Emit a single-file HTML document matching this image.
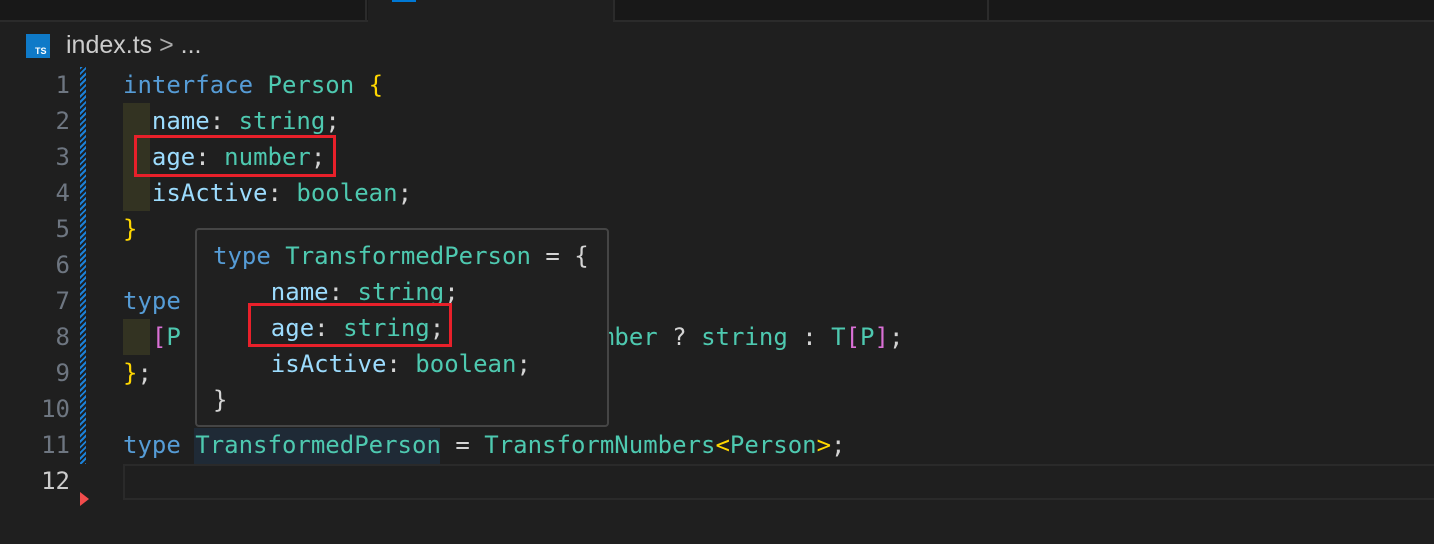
<!DOCTYPE html>
<html><head><meta charset="utf-8"><style>
*{margin:0;padding:0;box-sizing:border-box}
body{width:1434px;height:544px;background:#1f1f1f;overflow:hidden;position:relative;font-family:"DejaVu Sans Mono","Liberation Mono",monospace;font-size:24px}
.abs{position:absolute}
.ln{position:absolute;left:0;width:70px;text-align:right;color:#6e7681;line-height:36px}
.cl{position:absolute;left:123px;line-height:36px;white-space:pre;color:#d4d4d4}
.k{color:#569cd6}.t{color:#4ec9b0}.p{color:#9cdcfe}.y{color:#ffd700}.m{color:#da70d6}
</style></head><body>
<div class="abs" style="left:0;top:0;width:1434px;height:22px;background:#181818;border-bottom:2px solid #2b2b2b"></div>
<div class="abs" style="left:0;top:0;width:367px;height:22px;border-right:2px solid #2b2b2b"></div>
<div class="abs" style="left:368px;top:0;width:245px;height:24px;background:#1f1f1f"></div>
<div class="abs" style="left:392px;top:0;width:24px;height:2px;background:#0078d4"></div>
<div class="abs" style="left:613px;top:0;width:376px;height:22px;border-left:2px solid #2b2b2b;border-right:2px solid #2b2b2b"></div>
<div class="abs" style="left:26px;top:34px;width:24px;height:24px;background:#0f7ac8;color:#fff;font:bold 9px 'Liberation Sans',sans-serif;padding:12px 0 0 9px">TS</div>
<div class="abs" style="left:66px;top:31px;font:25px 'Liberation Sans',sans-serif;color:#cccccc;white-space:pre">index.ts <span style="color:#aaa;font-weight:100">&gt;</span> ...</div>
<div class="abs" style="left:80px;top:67px;width:6px;height:397px;background:repeating-linear-gradient(135deg,#1b81d8 0 2px,transparent 2px 4px)"></div>
<div class="abs" style="left:80px;top:492px;width:0;height:0;border-top:7px solid transparent;border-bottom:7px solid transparent;border-left:9px solid #f14c4c"></div>
<div class="abs" style="left:123px;top:103px;width:27px;height:108px;background:#333322"></div>
<div class="abs" style="left:123px;top:319px;width:27px;height:36px;background:#333322"></div>
<div class="abs" style="left:194px;top:428px;width:246px;height:36px;background:#1f2a36"></div>
<div class="abs" style="left:123px;top:464px;width:1311px;height:36px;border:2px solid #2a2a2a;border-right:none"></div>

<div class="ln" style="top:67px">1</div>
<div class="ln" style="top:103px">2</div>
<div class="ln" style="top:139px">3</div>
<div class="ln" style="top:175px">4</div>
<div class="ln" style="top:211px">5</div>
<div class="ln" style="top:247px">6</div>
<div class="ln" style="top:283px">7</div>
<div class="ln" style="top:319px">8</div>
<div class="ln" style="top:355px">9</div>
<div class="ln" style="top:391px">10</div>
<div class="ln" style="top:427px">11</div>
<div class="ln" style="top:463px;color:#cccccc">12</div>

<div class="cl" style="top:67px"><span class="k">interface</span> <span class="t">Person</span> <span class="y">{</span></div>
<div class="cl" style="top:103px">  <span class="p">name</span>: <span class="t">string</span>;</div>
<div class="cl" style="top:139px">  <span class="p">age</span>: <span class="t">number</span>;</div>
<div class="cl" style="top:175px">  <span class="p">isActive</span>: <span class="t">boolean</span>;</div>
<div class="cl" style="top:211px"><span class="y">}</span></div>
<div class="cl" style="top:283px"><span class="k">type</span> <span class="t">TransformNumbers</span><span class="y">&lt;</span><span class="t">T</span><span class="y">&gt;</span> = <span class="y">{</span></div>
<div class="cl" style="top:319px">  <span class="m">[</span><span class="t">P</span> <span class="k">in</span> <span class="k">keyof</span> <span class="t">T</span><span class="m">]</span>: <span class="t">T</span><span class="m">[</span><span class="t">P</span><span class="m">]</span> <span class="k">extends</span> <span class="t">number</span> ? <span class="t">string</span> : <span class="t">T</span><span class="m">[</span><span class="t">P</span><span class="m">]</span>;</div>
<div class="cl" style="top:355px"><span class="y">}</span>;</div>
<div class="cl" style="top:427px"><span class="k">type</span> <span class="t">TransformedPerson</span> = <span class="t">TransformNumbers</span><span class="y">&lt;</span><span class="t">Person</span><span class="y">&gt;</span>;</div>

<div class="abs" style="left:134px;top:135px;width:202px;height:42px;border:3px solid #e8202a"></div>

<div class="abs" style="left:195px;top:228px;width:414px;height:199px;background:#202020;border:2px solid #454545;border-radius:4px"></div>
<div class="cl" style="left:213px;top:238px"><span class="k">type</span> <span class="t">TransformedPerson</span> = {</div>
<div class="cl" style="left:213px;top:274px">    <span class="p">name</span>: <span class="t">string</span>;</div>
<div class="cl" style="left:213px;top:310px">    <span class="p">age</span>: <span class="t">string</span>;</div>
<div class="cl" style="left:213px;top:346px">    <span class="p">isActive</span>: <span class="t">boolean</span>;</div>
<div class="cl" style="left:213px;top:382px">}</div>
<div class="abs" style="left:248px;top:303px;width:204px;height:44px;border:3px solid #e8202a"></div>
</body></html>
